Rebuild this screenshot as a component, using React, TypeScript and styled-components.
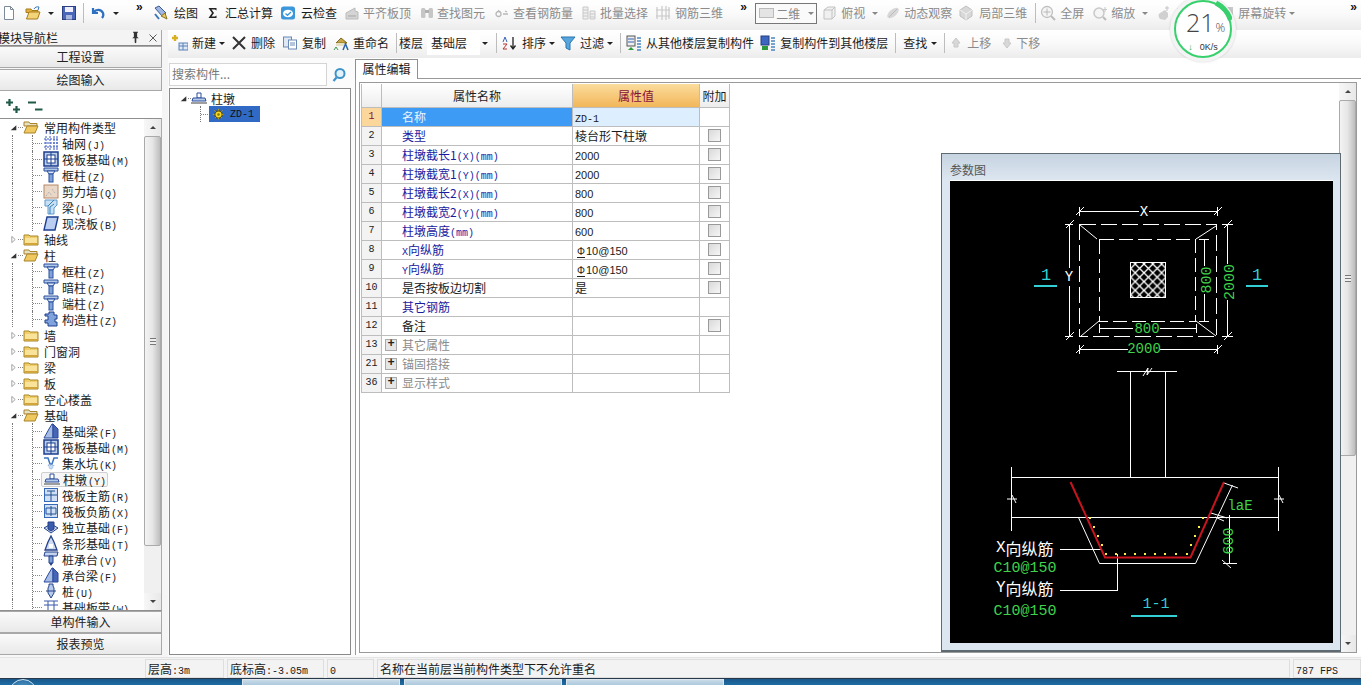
import React from "react";
import styled, { createGlobalStyle } from "styled-components";

const CJK = `"Noto Sans CJK SC", "Liberation Sans", sans-serif`;

const Global = createGlobalStyle`
  html, body { margin: 0; padding: 0; background: #f3f3f3; }
  * { box-sizing: border-box; }
  body { font-family: ${CJK}; font-size: 12px; color: #1a1a1a; overflow: hidden; }
`;

/* ---------- icons ---------- */
const S = styled.svg`flex: none; display: block;`;
const I = ({ children, size = 16 }: { children: React.ReactNode; size?: number }) => (
  <S width={size} height={size} viewBox="0 0 16 16">
    {children}
  </S>
);

const glyphs: Record<string, React.ReactNode> = {
  doc: <path d="M3.5 1.5h6l3 3v10h-9z M9.5 1.5v3h3" fill="#fff" stroke="#7d8a99" />,
  open: <><path d="M1 4h5l1 1.500h6v2H1z" fill="#e0b040" stroke="#a87a18" /><path d="M1.500 14l2.500-7h11l-2.500 7z" fill="#f4d479" stroke="#a87a18" /><path d="M9 4c1-2 3-2.500 5-2l-1 3" fill="none" stroke="#3c78b8" /></>,
  save: <><rect x="1.500" y="1.500" width="13" height="13" fill="#4a66b8" stroke="#2c3f80" /><rect x="4" y="2" width="8" height="5" fill="#eef" /><rect x="5" y="10" width="6" height="4.500" fill="#aab8dd" /></>,
  undo: <path d="M3 3v5h5M3.500 7.500C6 4 11 4 13 8c.7 1.800.2 3.600-1 5" fill="none" stroke="#2d6fc0" strokeWidth="2.200" />,
  draw: <><path d="M2 3l7 8 4-3-7-7z" fill="#9fb7e0" stroke="#3c5a98" /><path d="M8 11l6 3-2-6z" fill="#e8c860" stroke="#8a7420" /><path d="M2 9l4 5" stroke="#3c78b8" strokeWidth="2" /></>,
  sigma: <path d="M3.500 3h8v2.500L10 4.500H6.500L9 8l-2.500 3.500H10l1.500-1V13h-8l3.500-5z" fill="#222" />,
  cloud: <><rect x="1" y="1.500" width="14" height="13" rx="2.500" fill="#3b96da" /><ellipse cx="8" cy="8.500" rx="5" ry="3.800" fill="#fff" /><path d="M5.500 8.500l2 1.800 3.500-3.300" stroke="#3b96da" strokeWidth="1.300" fill="none" /></>,
  level: <><path d="M2 14V8l9-5v3l3 1v7z" fill="#d4d4d4" stroke="#bbb" /><path d="M4 11h8" stroke="#a5a5a5" /></>,
  find: <><rect x="2" y="3" width="4.500" height="10" rx="1.500" fill="#c6c6c6" /><rect x="9.500" y="3" width="4.500" height="10" rx="1.500" fill="#c6c6c6" /><rect x="6" y="5" width="4" height="3" fill="#b0b0b0" /></>,
  eye: <path d="M2 9a2.500 2.500 0 1 0 5 0 2.500 2.500 0 1 0-5 0M9 9h5M5 5l-1 2M11 6l2 1" fill="none" stroke="#b8b8b8" strokeWidth="1.300" />,
  batch: <path d="M2 2h5v12H2zM2 5h5M2 8h5M2 11h5M9 6h5v8H9zM9 9h5M9 12h5" fill="#f0f0f0" stroke="#c8c8c8" />,
  grid3: <path d="M2 2v12M7 1v14M11 1v14M14 2v12M1 5h14M1 11h14" fill="none" stroke="#c8c8c8" strokeWidth="1.200" />,
  view: <><path d="M3 5l4-3h7v9l-3 3H3z" fill="#f0f0f0" stroke="#c2c2c2" /><path d="M3 5h8v9M11 5l3-3" fill="none" stroke="#c2c2c2" /></>,
  orbit: <><ellipse cx="8" cy="8" rx="7" ry="3.500" transform="rotate(-40 8 8)" fill="#d8d8d8" /><path d="M4 12l8-8" stroke="#bbb" /></>,
  local: <><path d="M8 1l6 4v6l-6 4-6-4V5z" fill="#d8d8d8" stroke="#c0c0c0" /><path d="M2 5l6 4 6-4M8 9v6" stroke="#f2f2f2" fill="none" /></>,
  zoomfull: <><circle cx="7" cy="7" r="5.500" fill="#f5f5f5" stroke="#c0c0c0" strokeWidth="1.300" /><path d="M7 3.500v7M3.500 7h7" stroke="#b8b8b8" /><path d="M11 11l4 4" stroke="#bbb" strokeWidth="2" /></>,
  zoom: <><circle cx="7" cy="8" r="5" fill="#f5f5f5" stroke="#c8c8c8" strokeWidth="1.500" /><path d="M11 12l3 3" stroke="#bbb" strokeWidth="2" /><path d="M13 2v5M11 4.500h4" stroke="#c8c8c8" /></>,
  pan: <><path d="M4 14c-2-3-2-5 0-6l5-3 3 3v4l-3 3z" fill="#d0d0d0" /><path d="M11 1v5M9 3h4" stroke="#c4c4c4" /></>,
  rotate: <rect x="2" y="2" width="12" height="12" fill="#c8c8c8" />,
  newitem: <><path d="M3 0v6M0 3h6" stroke="#d8b020" strokeWidth="2.400" /><rect x="7" y="8" width="9" height="7" fill="#dfe8f5" stroke="#5a82b8" /><path d="M7 11h9M11 8v7" stroke="#5a82b8" /></>,
  del: <path d="M2 2l12 12M14 2L2 14" stroke="#333" strokeWidth="2" />,
  copy: <><rect x="1.500" y="2" width="8" height="10" fill="#dfe8f5" stroke="#6a8ab5" /><rect x="6.500" y="5" width="8" height="9" fill="#fff" stroke="#6a8ab5" /><path d="M8 8h5M8 10h5" stroke="#6a8ab5" /></>,
  rename: <><path d="M3 8l5-5 6 5z" fill="#c9a64a" stroke="#7c6a20" /><rect x="3" y="8" width="8" height="3" fill="#e6e0c0" /><path d="M10 15l2.500-6 2.500 6" stroke="#2d63ad" strokeWidth="1.500" fill="none" /><path d="M1 15l2-3 2 3" stroke="#3a9a4a" fill="none" /></>,
  sort: <><path d="M12 2v11M9.500 10.500l2.500 3.500 2.500-3.500" stroke="#222" fill="none" strokeWidth="1.300" /><path d="M2 7l2-5 2 5" stroke="#3362b5" fill="none" /><path d="M2 9h4l-4 5h4" stroke="#b53333" fill="none" /></>,
  filter: <path d="M1 2h14l-5 6v7l-4-2V8z" fill="#57a7de" stroke="#2c75ad" />,
  copyin: <><rect x="1" y="1" width="8" height="10" fill="#eee" stroke="#555" /><path d="M2 4h6M2 7h6" stroke="#3362b5" /><path d="M2 15l3-3 3 3z" fill="#2a9a3a" /><path d="M11 3h4M11 6h4M11 9h4M11 12h4M11 15h4" stroke="#4a86c0" strokeWidth="1.400" /></>,
  copyout: <><rect x="1" y="1" width="8" height="9" fill="#3c66c0" stroke="#223f80" /><rect x="2" y="11" width="6" height="4" fill="#2a9a3a" /><path d="M11 3h4M11 6h4M11 9h4M11 12h4M11 15h4" stroke="#4a86c0" strokeWidth="1.400" /></>,
  up: <path d="M8 3l4 5h-2v4H6V8H4z" fill="#d8d8d8" stroke="#c8c8c8" />,
  down: <path d="M8 13l4-5h-2V4H6v4H4z" fill="#d8d8d8" stroke="#c8c8c8" />,
  search: <><circle cx="9" cy="6.500" r="4.500" fill="#e4f2fb" stroke="#3e93c8" strokeWidth="2" /><path d="M5.500 10.500l-3 3.500" stroke="#3e93c8" strokeWidth="2.200" /></>,
  folder: <><path d="M1 4h5l1 1h8v9H1z" fill="#f1cf68" stroke="#a8842a" /><path d="M2 7h12v6H2z" fill="#f9e29a" /><path d="M2 12h12v1.500H2z" fill="#d2a437" /></>,
  folderOpen: <><path d="M1 3h5l1 1.500h7V7H1z" fill="#e8e0c0" stroke="#a8842a" /><path d="M1 14l3-7h11l-3 7z" fill="#f0c860" stroke="#a8842a" /></>,
  axis: <path d="M1 4h14M1 8h14M1 12h14M3 1v14M7 1v14M11 1v14M14 1v14" stroke="#3a58c0" fill="none" strokeDasharray="2 1" />,
  raft: <><rect x="1" y="1" width="14" height="14" fill="#bcd0ec" stroke="#1b3f8f" strokeWidth="1.500" /><rect x="4" y="4" width="8" height="8" fill="#fff" stroke="#1b3f8f" /><path d="M8 1v14M1 8h14" stroke="#1b3f8f" /></>,
  col: <><path d="M1 1h14v3H1z" fill="#b4c9ea" stroke="#284f9c" /><path d="M4 4h8l-2 3H6z" fill="#dce8f8" stroke="#284f9c" /><rect x="6" y="7" width="4" height="8" fill="#7fa3da" stroke="#284f9c" /></>,
  wall: <><rect x="1" y="2" width="14" height="13" fill="#e9d7c8" stroke="#b88866" /><path d="M3 13l3-4 3 4M9 6l3 4" stroke="#a8a8a8" strokeDasharray="1 1" fill="none" /></>,
  beam: <><path d="M2 1h12v5l-3 3v6H5V7H2z" fill="#c8e0f4" stroke="#5c99cc" /><path d="M5 7l6-6M7 15V8l4-3" stroke="#3d7fb8" fill="none" /></>,
  slab: <path d="M4 2h11l-3 13H1z" fill="#b9cef0" stroke="#1e3f90" strokeWidth="1.400" />,
  stru: <path d="M6 1h5v3h3v4h-2v3h2v4H5v-3H2V9h3V5H2V3h4z" fill="#7fa3da" stroke="#1e3f90" />,
  fbeam: <><path d="M1 15l5-9 3-5h1v14z" fill="#a7bde4" stroke="#28499c" /><path d="M10 1l5 5v9h-5z" fill="#4766b5" stroke="#28499c" /></>,
  pit: <><path d="M1 3h4l2 6h2l2-6h4" fill="none" stroke="#3d74c0" strokeWidth="1.500" /><path d="M5 10h6l-2 4H7z" fill="#c7dcf5" stroke="#8caad6" strokeDasharray="1 1" /></>,
  pier: <><path d="M6 3h4v5H6z" fill="#fff" stroke="#2c4f9c" /><path d="M2 8h12l1 3H1z" fill="#b6caea" stroke="#2c4f9c" /><path d="M0 13h16" stroke="#888" strokeWidth="1.600" /></>,
  main: <><rect x="1.500" y="1.500" width="13" height="13" fill="#cfe0f6" stroke="#3668b8" /><path d="M2 8h12M8 4v10M4 4h8" stroke="#22518f" fill="none" /></>,
  neg: <><rect x="1.500" y="1.500" width="13" height="13" fill="#cfe0f6" stroke="#3668b8" /><path d="M3 5h10v6H3zM8 3v10" stroke="#22518f" fill="none" /></>,
  iso: <><path d="M1 9l7-4 7 4-7 5z" fill="#cbdaf0" stroke="#24418a" /><path d="M5 3h6v7l-3 2-3-2z" fill="#3a5caa" stroke="#24418a" /></>,
  strip: <><path d="M8 1l3 6 3 8H2l3-8z" fill="#cedcf2" stroke="#24418a" strokeWidth="1.300" /><path d="M6 9h4v4H6z" fill="#fff" /></>,
  cap: <><path d="M2 1h13l-1 4H1z" fill="#c3d5ee" stroke="#24418a" /><path d="M6 5h4v7H6z" fill="#7aa0d8" stroke="#24418a" /><path d="M6 12h4l-2 3z" fill="#24418a" /></>,
  pile: <><path d="M6 1h4v2l1 2v5l-3 5-3-5V5l1-2z" fill="#b6caea" stroke="#24418a" /><path d="M3 8h10" stroke="#24418a" /></>,
  strap: <path d="M1 2h14M1 6h14M5 2v13M11 2v13" fill="none" stroke="#3a58a8" />,
  gear: <><circle cx="8" cy="8" r="4.500" fill="#f4d82c" stroke="#5c4a00" strokeWidth="1.500" /><circle cx="8" cy="8" r="1.600" fill="#8d7400" /><path d="M8 1v14M1 8h14M3 3l10 10M13 3L3 13" stroke="#c8a800" strokeWidth="1" strokeDasharray="2 9" /></>,
  pin: <path d="M5 1h6v1h-1v5l2 2H9v5l-1 1-1-1V9H4l2-2V2H5z" fill="#333" />,
  close: <path d="M4 4l8 8M12 4l-8 8" stroke="#444" />,
  expandAll: <path d="M4.500 1v7M1 4.500h7M11.500 8v7M8 11.500h7" stroke="#1f5a48" strokeWidth="2.200" />,
  collapseAll: <path d="M1 4.500h8M8 11.500h7.500" stroke="#1f5a48" strokeWidth="2.200" />,
  triClosed: <path d="M5 2.500l6 5.500-6 5.500z" fill="#fff" stroke="#8a8a8a" strokeWidth="1.400" />,
  triOpen: <path d="M13 4v9H3z" fill="#333" />,
};

/* ---------- page frame ---------- */
const Page = styled.div`
  width: 1361px; height: 685px; position: relative; overflow: hidden;
  display: flex; flex-direction: column; background: #f5f5f5;
`;
const Bar = styled.div<{ $h: number; $pl?: number; $pb?: number }>`
  height: ${(p) => p.$h}px; flex: none; display: flex; align-items: center;
  padding-left: ${(p) => p.$pl ?? 0}px; padding-bottom: ${(p) => p.$pb ?? 0}px; white-space: nowrap;
  background: linear-gradient(#ffffff, #fafafa 45%, #ececec);
`;
const Tool = styled.div<{ $ml?: number; $gap?: number; $muted?: boolean }>`
  display: flex; align-items: center; flex: none; height: 100%;
  margin-left: ${(p) => p.$ml ?? 0}px; gap: ${(p) => p.$gap ?? 4}px;
  color: ${(p) => (p.$muted ? "#8b8b8b" : "#1c1c1c")}; font-size: 12px; line-height: 16px;
`;
const Caret = styled.span<{ $ml?: number; $muted?: boolean }>`
  flex: none; width: 0; height: 0; margin-left: ${(p) => p.$ml ?? 0}px;
  border-left: 3px solid transparent; border-right: 3px solid transparent;
  border-top: 3px solid ${(p) => (p.$muted ? "#888" : "#222")};
`;
const Sep = styled.span<{ $ml: number }>`
  flex: none; width: 1px; height: 20px; margin-left: ${(p) => p.$ml}px; background: #bdbdbd;
`;
const More = styled.span<{ $ml: number }>`
  flex: none; width: 10px; margin-left: ${(p) => p.$ml}px; margin-top: -12px;
  font: bold 12px/10px "Liberation Sans", sans-serif; color: #111;
`;
const Combo = styled.div`
  flex: none; width: 62px; height: 21px; margin-left: 5px; border: 1px solid #777;
  display: flex; align-items: center; padding-left: 3px; gap: 2px; color: #888; background: #fafafa;
`;
const ComboBox = styled.span`width: 15px; height: 10px; background: #e4e4e4; border: 1px solid #bbb;`;
const FloorValue = styled.span`
  flex: none; width: 53px; margin-left: 4px; padding-left: 4px; height: 24px; line-height: 24px; background: #fff;
`;

const Body = styled.div`flex: 1; display: flex; min-height: 0;`;

/* ---------- left navigator ---------- */
const Left = styled.div`
  width: 162px; flex: none; display: flex; flex-direction: column; margin-right: 6px;
  background: #f7f7f7; padding-bottom: 2px;
`;
const NavHead = styled.div`
  height: 16px; flex: none; display: flex; align-items: center; margin-left: -2px; padding-right: 1px;
  font-size: 12px; border-bottom: 1px solid #888; background: #f4f4f4; border-right: 1px solid #aaa;
`;
const NavTitle = styled.span`flex: 1;`;
const NavGap = styled.span`flex: none; width: 4px;`;
const NavBtn = styled.div<{ $mt?: number }>`
  height: 22px; flex: none; text-align: center; line-height: 20px; font-size: 12px; margin-top: ${(p) => p.$mt ?? 0}px;
  background: linear-gradient(#fafafa, #e9e9e9); border: 1px solid #a8a8a8; border-left: 0; color: #222;
`;
const Tools = styled.div`
  height: 27px; flex: none; display: flex; align-items: flex-start; padding: 7px 0 0 5px; gap: 6px; background: #fff;
`;
const TreeWrap = styled.div`
  flex: 1; min-height: 0; display: flex; background: #fff; border: 1px solid #8f8f8f; border-left: 0; border-right-color: #aaa;
`;
const Tree = styled.div`flex: 1; overflow: hidden; min-width: 0;`;
const Row = styled.div`display: flex; align-items: center; height: 16px; position: relative;`;
const Expander = styled.span`flex: none; margin-left: 9px; width: 9px; display: block;`;
const HDots = styled.span<{ $w: number }>`
  flex: none; width: ${(p) => p.$w}px; height: 1px;
  background: repeating-linear-gradient(90deg, #888 0 1px, transparent 1px 2px);
`;
const Rail = styled.span<{ $ml?: number; $w: number }>`
  flex: none; align-self: stretch; margin-left: ${(p) => p.$ml ?? 0}px; width: ${(p) => p.$w}px;
  border-left: 1px dotted #777;
`;
const Branch = styled.span<{ $w?: number }>`
  flex: none; align-self: stretch; width: ${(p) => p.$w ?? 11}px; border-left: 1px dotted #777; display: flex; align-items: center;
`;
const Label = styled.span<{ $ml: number }>`margin-left: ${(p) => p.$ml}px; font-size: 12px; white-space: nowrap; color: #1c1c1c;`;
const Code = styled.span`font: 10px "Liberation Mono", monospace; margin-left: 1px;`;
const Hover = styled.div`
  display: flex; align-items: center; flex: none; height: 15px; width: 67px; margin-left: -2px; padding-left: 2px;
  border: 1px solid #cfcfcf; border-radius: 2px; background: #f6f6f6;
`;

const Scroll = styled.div<{ $w: number }>`
  width: ${(p) => p.$w}px; flex: none; display: flex; flex-direction: column; align-items: center; background: #f0f0f0;
`;
const ScrollBtn = styled.div`
  height: 17px; flex: none; width: 100%; display: flex; align-items: center; justify-content: center;
  background: linear-gradient(90deg, #f7f7f7, #e8e8e8);
`;
const ArrowUp = styled.span`width: 0; height: 0; border-left: 3px solid transparent; border-right: 3px solid transparent; border-bottom: 3px solid #444;`;
const ArrowDown = styled(ArrowUp)`border-bottom: 0; border-top: 3px solid #444;`;
const Thumb = styled.div<{ $h: number }>`
  height: ${(p) => p.$h}px; width: 100%; flex: none; border: 1px solid #aaa; border-radius: 2px;
  background: linear-gradient(90deg, #f3f3f3, #e6e6e6 50%, #bdbdbd);
  display: flex; align-items: center; justify-content: center;
`;
const Grip = styled.span`width: 6px; height: 7px; background: repeating-linear-gradient(#777 0 1px, #eee 1px 3px);`;
const Spacer = styled.div`flex: 1;`;

/* ---------- centre ---------- */
const Main = styled.div`flex: 1; min-width: 0; display: flex; flex-direction: column;`;
const Work = styled.div`flex: 1; min-height: 0; display: flex; background: #fbfbfb; padding-bottom: 2px;`;
const Mid = styled.div`
  width: 183px; flex: none; margin-right: 4px; padding-top: 5px; display: flex; flex-direction: column; gap: 2px;
`;
const SearchRow = styled.div`height: 23px; flex: none; display: flex; align-items: center; gap: 4px;`;
const SearchInput = styled.div`
  width: 158px; height: 23px; border: 1px solid #d5d5d5; background: #fff; color: #777; padding-left: 2px; line-height: 20px; margin-left: 1px;
`;
const MidTree = styled.div`
  flex: 1; background: #fff; border: 1px solid #8a8a8a; margin-left: 1px; padding-top: 1px;
`;
const MidRow = styled.div<{ $pl: number }>`
  display: flex; align-items: center; height: 16px; padding-left: ${(p) => p.$pl}px;
`;
const Selected = styled.span`
  display: flex; align-items: center; gap: 5px; width: 51px; height: 16px; padding-left: 3px; margin-left: 1px; background: #316ac5;
  font: 10px "Liberation Mono", monospace; color: #111;
`;

/* ---------- right ---------- */
const Right = styled.div`flex: 1; min-width: 0; display: flex; flex-direction: column;`;
const TabStrip = styled.div`height: 20px; flex: none; display: flex; align-items: flex-end; background: #fff;`;
const Tab = styled.div`
  width: 63px; height: 20px; border: 1px solid #909090; border-bottom: 0; background: #fff; text-align: center; line-height: 17px; margin-bottom: -1px; z-index: 1;
`;
const Panel = styled.div`
  flex: 1; min-height: 0; position: relative; background: #fff; border: 1px solid #999; border-width: 1px 0 0 1px; padding: 3px 4px 2px 3px; display: flex;
`;
const Inner = styled.div`
  flex: 1; display: flex; border: 1px solid #9a9a9a; min-width: 0; background: #fff; position: relative;
`;
const GridArea = styled.div`flex: 1; padding: 1px 0 0 1px; min-width: 0;`;
const Table = styled.table`
  border-collapse: collapse; table-layout: fixed; width: 368px; font-size: 12px;
  td, th { border: 1px solid #bdbdbd; padding: 0; height: 19px; font-weight: normal; overflow: hidden; white-space: nowrap; }
  th { height: 23px; border-top: 0; }
`;
const Th = styled.th<{ $hot?: boolean }>`
  background: ${(p) => (p.$hot ? "linear-gradient(#fbdc9c, #f2b65a)" : "linear-gradient(#ffffff, #ededed)")};
  color: ${(p) => (p.$hot ? "#86103c" : "#1c1c1c")};
`;
const Num = styled.td<{ $on?: boolean }>`
  text-align: center; font: 10px "Liberation Mono", monospace;
  background: ${(p) => (p.$on ? "#fcd79c" : "#f3f3f3")}; color: ${(p) => (p.$on ? "#8a0f2c" : "#222")};
`;
const Name = styled.td<{ $tone: string }>`
  padding-left: 20px !important;
  color: ${(p) => ({ blue: "#1b1ba0", black: "#1a1a1a", gray: "#8b8b8b", sel: "#eaf4ff" } as Record<string, string>)[p.$tone]};
  background: ${(p) => (p.$tone === "sel" ? "#3d9bf5" : "#fff")};
`;
const GroupName = styled.div`display: flex; align-items: center; gap: 5px; margin-left: -17px; color: #8b8b8b;`;
const Plus = styled.span`
  width: 12px; height: 12px; border: 1px solid #aaa; background: #e6e6e6; flex: none;
  font: bold 12px/9px "Liberation Mono", monospace; text-align: center; color: #222;
`;
const Val = styled.td<{ $sel?: boolean }>`
  padding-left: 2px !important; background: ${(p) => (p.$sel ? "#ddeeff" : "#fff")};
`;
const Latin = styled.span`font: 11px "Liberation Sans", sans-serif;`;
const Rebar = styled.span`
  display: inline-block; font: 10px/10px "Liberation Sans", sans-serif; border-bottom: 1px solid #222; margin: 0 1px 0 2px;
`;
const Mono = styled.span`font: 10px "Liberation Mono", monospace;`;
const Extra = styled.td`text-align: center;`;
const Check = styled.span`
  display: block; width: 13px; height: 13px; margin: 0 auto; border: 1px solid #9a9a9a;
  background: linear-gradient(135deg, #d9d9d9, #f6f6f6);
`;
const ParamWin = styled.div`
  position: absolute; left: 581px; top: 70px; width: 400px; height: 499px; border: 1px solid #5e6a72; border-bottom: 2px solid #5e6a72;
  background: linear-gradient(#c6d3e0, #dce6f1 26px); padding: 0 7px 7px 8px; display: flex; flex-direction: column;
`;
const ParamTitle = styled.div`height: 26px; flex: none; line-height: 31px; color: #555; font-size: 12px;`;
const Black = styled.div`flex: 1; background: #000; min-height: 0; border-top: 1px solid #fff;`;

/* ---------- status ---------- */
const Status = styled.div`
  height: 21px; flex: none; display: flex; padding-left: 145px; gap: 3px; background: #f3f3f3; border-top: 1px solid #e4e4e4; padding-top: 1px;
`;
const Cell = styled.div<{ $w?: number }>`
  ${(p) => (p.$w ? `width: ${p.$w}px; flex: none;` : "flex: 1;")}
  border: 1px solid #dedede; padding-left: 2px; line-height: 17px; font-size: 12px; white-space: nowrap;
`;
const Task = styled.div`
  height: 7px; flex: none; display: flex; align-items: flex-start; padding-left: 242px; gap: 4px; position: relative;
  background: linear-gradient(#1a5788, #1d6ca4); border-top: 1px solid #26384a;
`;
const Orb = styled.span`
  position: absolute; left: 9px; top: 0; width: 28px; height: 28px; border-radius: 50%; border: 1px solid #cfe3f2;
  background: radial-gradient(#5aa5d8, #1e5f90);
`;
const TaskBtn = styled.span<{ $w: number }>`
  width: ${(p) => p.$w}px; height: 7px; flex: none; border: 1px solid #dbe6ef; border-bottom: 0; background: linear-gradient(#c8dbe9, #a6c5da);
`;

/* ---------- speed ball ---------- */
const Ball = styled.div`
  position: absolute; left: 1170px; top: -4px; width: 66px; height: 66px; border-radius: 50%; background: #f4f4f4;
  box-shadow: 0 0 2px rgba(0,0,0,.18); display: flex; align-items: center; justify-content: center;
`;
const BallFace = styled.div`
  width: 58px; height: 58px; border-radius: 50%; background: #fff; border: 2px solid #38d06c; position: relative;
  display: flex; flex-direction: column; align-items: center; font-family: "Open Sans", "Liberation Sans", sans-serif; color: #444;
`;
const Pct = styled.div`margin-top: 8px; margin-left: 5px; font-size: 25px; font-weight: 300; line-height: 25px;`;
const PctSign = styled.span`font-size: 12px; margin-left: 1px;`;
const Speed = styled.div`font: 9px/10px "Liberation Sans", sans-serif; display: flex; gap: 7px; margin-top: 2px; color: #333;`;
const SpeedArrow = styled.span`color: #1aa64a; font-weight: bold;`;
const BallArc = styled.svg`position: absolute; left: -2px; top: -2px; pointer-events: none;`;

/* ---------- data ---------- */
type Item = { i: string; t: string; ml: number; gap: number; muted?: boolean; caret?: number };
const Tb1: React.FC = () => {
  const row: Item[] = [
    { i: "draw", t: "绘图", ml: 7, gap: 5 },
    { i: "sigma", t: "汇总计算", ml: 7, gap: 4 },
    { i: "cloud", t: "云检查", ml: 7, gap: 5 },
    { i: "level", t: "平齐板顶", ml: 7, gap: 3, muted: true },
    { i: "find", t: "查找图元", ml: 8, gap: 2, muted: true },
    { i: "eye", t: "查看钢筋量", ml: 9, gap: 3, muted: true },
    { i: "batch", t: "批量选择", ml: 8, gap: 3, muted: true },
    { i: "grid3", t: "钢筋三维", ml: 7, gap: 4, muted: true },
  ];
  const row2: Item[] = [
    { i: "view", t: "俯视", ml: 4, gap: 4, muted: true, caret: 7 },
    { i: "orbit", t: "动态观察", ml: 7, gap: 3, muted: true },
    { i: "local", t: "局部三维", ml: 6, gap: 5, muted: true },
  ];
  const row3: Item[] = [
    { i: "zoomfull", t: "全屏", ml: 4, gap: 4, muted: true },
    { i: "zoom", t: "缩放", ml: 8, gap: 3, muted: true, caret: 7 },
    { i: "pan", t: "平移", ml: 8, gap: 4, muted: true },
    { i: "rotate", t: "屏幕旋转", ml: 19, gap: 3, muted: true, caret: 3 },
  ];
  const render = (r: Item[]) =>
    r.map((x) => (
      <React.Fragment key={x.t}>
        <Tool $ml={x.ml} $gap={x.gap} $muted={x.muted}>
          <I>{glyphs[x.i]}</I>
          {x.t}
        </Tool>
        {x.caret !== undefined && <Caret $ml={x.caret} $muted={x.muted} />}
      </React.Fragment>
    ));
  return (
    <Bar $h={30} $pl={1} $pb={4}>
      <Tool><I>{glyphs.doc}</I></Tool>
      <Tool $ml={8}><I>{glyphs.open}</I></Tool>
      <Caret $ml={7} />
      <Tool $ml={7}><I>{glyphs.save}</I></Tool>
      <Sep $ml={6} />
      <Tool $ml={6}><I>{glyphs.undo}</I></Tool>
      <Caret $ml={7} />
      <More $ml={17}>»</More>
      {render(row)}
      <More $ml={17}>»</More>
      <Combo><ComboBox />二维<Caret $ml={6} $muted /></Combo>
      {render(row2)}
      <Sep $ml={8} />
      {render(row3)}
      <More $ml={55}>»</More>
    </Bar>
  );
};

const Tb2: React.FC = () => (
  <Bar $h={28} $pl={4} $pb={2}>
    <Tool $gap={4}><I>{glyphs.newitem}</I>新建</Tool><Caret $ml={3} />
    <Tool $ml={6} $gap={4}><I>{glyphs.del}</I>删除</Tool>
    <Tool $ml={7} $gap={4}><I>{glyphs.copy}</I>复制</Tool>
    <Tool $ml={7} $gap={4}><I>{glyphs.rename}</I>重命名</Tool>
    <Sep $ml={7} />
    <Tool $ml={2}>楼层</Tool>
    <FloorValue>基础层</FloorValue>
    <Caret $ml={2} />
    <Sep $ml={8} />
    <Tool $ml={4} $gap={5}><I>{glyphs.sort}</I>排序</Tool><Caret $ml={3} />
    <Tool $ml={5} $gap={4}><I>{glyphs.filter}</I>过滤</Tool><Caret $ml={3} />
    <Sep $ml={7} />
    <Tool $ml={5} $gap={4}><I>{glyphs.copyin}</I>从其他楼层复制构件</Tool>
    <Tool $ml={6} $gap={4}><I>{glyphs.copyout}</I>复制构件到其他楼层</Tool>
    <Sep $ml={7} />
    <Tool $ml={7}>查找</Tool><Caret $ml={4} />
    <Sep $ml={7} />
    <Tool $ml={3} $gap={3} $muted><I>{glyphs.up}</I>上移</Tool>
    <Tool $ml={8} $gap={1} $muted><I>{glyphs.down}</I>下移</Tool>
  </Bar>
);

const treeRows: { k: 0 | 1; t: string; c?: string; i?: string; open?: boolean; hover?: boolean }[] = [
  { k: 0, t: "常用构件类型", open: true },
  { k: 1, t: "轴网", c: "(J)", i: "axis" },
  { k: 1, t: "筏板基础", c: "(M)", i: "raft" },
  { k: 1, t: "框柱", c: "(Z)", i: "col" },
  { k: 1, t: "剪力墙", c: "(Q)", i: "wall" },
  { k: 1, t: "梁", c: "(L)", i: "beam" },
  { k: 1, t: "现浇板", c: "(B)", i: "slab" },
  { k: 0, t: "轴线" },
  { k: 0, t: "柱", open: true },
  { k: 1, t: "框柱", c: "(Z)", i: "col" },
  { k: 1, t: "暗柱", c: "(Z)", i: "col" },
  { k: 1, t: "端柱", c: "(Z)", i: "col" },
  { k: 1, t: "构造柱", c: "(Z)", i: "stru" },
  { k: 0, t: "墙" },
  { k: 0, t: "门窗洞" },
  { k: 0, t: "梁" },
  { k: 0, t: "板" },
  { k: 0, t: "空心楼盖" },
  { k: 0, t: "基础", open: true },
  { k: 1, t: "基础梁", c: "(F)", i: "fbeam" },
  { k: 1, t: "筏板基础", c: "(M)", i: "raft" },
  { k: 1, t: "集水坑", c: "(K)", i: "pit" },
  { k: 1, t: "柱墩", c: "(Y)", i: "pier", hover: true },
  { k: 1, t: "筏板主筋", c: "(R)", i: "main" },
  { k: 1, t: "筏板负筋", c: "(X)", i: "neg" },
  { k: 1, t: "独立基础", c: "(F)", i: "iso" },
  { k: 1, t: "条形基础", c: "(T)", i: "strip" },
  { k: 1, t: "桩承台", c: "(V)", i: "cap" },
  { k: 1, t: "承台梁", c: "(F)", i: "fbeam" },
  { k: 1, t: "桩", c: "(U)", i: "pile" },
  { k: 1, t: "基础板带", c: "(W)", i: "strap" },
];

const TreeItem: React.FC<{ r: (typeof treeRows)[number] }> = ({ r }) => {
  if (r.k === 0)
    return (
      <Row>
        <Expander><I size={9}>{r.open ? glyphs.triOpen : glyphs.triClosed}</I></Expander>
        <HDots $w={5} />
        <I>{r.open ? glyphs.folderOpen : glyphs.folder}</I>
        <Label $ml={5}>{r.t}</Label>
      </Row>
    );
  const body = (
    <>
      <I>{glyphs[r.i as string]}</I>
      <Label $ml={3}>{r.t}<Code>{r.c}</Code></Label>
    </>
  );
  return (
    <Row>
      <Rail $ml={12} $w={20} />
      <Branch><HDots $w={10} /></Branch>
      {r.hover ? <Hover>{body}</Hover> : body}
    </Row>
  );
};

const rows: { n: number; name: React.ReactNode; tone: string; val?: React.ReactNode; check?: boolean; group?: boolean }[] = [
  { n: 1, name: "名称", tone: "sel", val: <Mono>ZD-1</Mono> },
  { n: 2, name: "类型", tone: "blue", val: "棱台形下柱墩", check: true },
  { n: 3, name: <>柱墩截长1<Mono>(X)(mm)</Mono></>, tone: "blue", val: <Latin>2000</Latin>, check: true },
  { n: 4, name: <>柱墩截宽1<Mono>(Y)(mm)</Mono></>, tone: "blue", val: <Latin>2000</Latin>, check: true },
  { n: 5, name: <>柱墩截长2<Mono>(X)(mm)</Mono></>, tone: "blue", val: <Latin>800</Latin>, check: true },
  { n: 6, name: <>柱墩截宽2<Mono>(Y)(mm)</Mono></>, tone: "blue", val: <Latin>800</Latin>, check: true },
  { n: 7, name: <>柱墩高度<Mono>(mm)</Mono></>, tone: "blue", val: <Latin>600</Latin>, check: true },
  { n: 8, name: <><Mono>X</Mono>向纵筋</>, tone: "blue", val: <Latin><Rebar>Φ</Rebar>10@150</Latin>, check: true },
  { n: 9, name: <><Mono>Y</Mono>向纵筋</>, tone: "blue", val: <Latin><Rebar>Φ</Rebar>10@150</Latin>, check: true },
  { n: 10, name: "是否按板边切割", tone: "black", val: "是", check: true },
  { n: 11, name: "其它钢筋", tone: "blue" },
  { n: 12, name: "备注", tone: "black", check: true },
  { n: 13, name: "其它属性", tone: "gray", group: true },
  { n: 21, name: "锚固搭接", tone: "gray", group: true },
  { n: 36, name: "显示样式", tone: "gray", group: true },
];

/* ---------- CAD drawing ---------- */
const W = "#ffffff";
const G = "#3fd24a";
const C = "#33cfd6";
const cadMono = `"Liberation Mono", monospace`;
const Tk: React.FC<{ x: number; y: number }> = ({ x, y }) => (
  <path d={`M${x - 4} ${y + 4}L${x + 4} ${y - 4}`} stroke={W} fill="none" />
);
const Txt: React.FC<{ x: number; y: number; c?: string; s?: number; r?: number; children: React.ReactNode }> = ({ x, y, c = G, s = 13, r, children }) => (
  <text x={x} y={y} fill={c} fontSize={s} fontFamily={cadMono} textAnchor="middle" dominantBaseline="central" transform={r ? `rotate(${r} ${x} ${y})` : undefined}>
    {children}
  </text>
);
const Drawing: React.FC = () => {
  const dots = [[451,205],[463,232],[475,259],[487,286],[499,313],[529,313],[556,313],[586,313],[616,313],[646,313],[676,313],[709,313],[742,313],[754,286],[766,259],[778,232],[790,205]];
  return (
    <svg width="382" height="462" viewBox="950 181 382 462" style={{ display: "block" }} shapeRendering="crispEdges">
      <defs>
        <pattern id="hatch" width="8.800" height="8.800" patternUnits="userSpaceOnUse">
          <path d="M0 0L8.800 8.800M8.800 0L0 8.800" stroke="#fff" strokeWidth="1.300" shapeRendering="auto" />
        </pattern>
      </defs>
      <g fill="none" stroke={W} strokeWidth="1">
        <rect x="1079.500" y="224.500" width="137" height="112" strokeDasharray="16 5" />
        <rect x="1099.500" y="239.500" width="96" height="82" strokeDasharray="14 5" />
        <rect x="1130.500" y="262.500" width="35" height="35" fill="url(#hatch)" />
        <path shapeRendering="auto" d="M1080 225L1097 239M1216 226L1196 239M1099 321L1081 336M1196 321L1216 336" />
        <path d="M1079.500 211.500H1139M1149 211.500H1217.500M1079.500 207V216M1217.500 207V216" />
        <path d="M1065 224.500H1073M1069.500 224.500V268M1069.500 286V336.500M1065 336.500H1073" />
        <path d="M1222 224.500H1233M1227.500 224.500V264M1227.500 300V336.500M1222 336.500H1233" />
        <path d="M1199 239.500H1209M1204.500 239.500V266M1204.500 294V321.500M1199 321.500H1209" />
        <path d="M1099.500 328.500H1133M1160 328.500H1196M1099.500 324V333M1196 324V333" />
        <path d="M1079.500 349.500H1128M1160 349.500H1217.500M1079.500 345V354M1217.500 345V354" />
      </g>
      <Tk x={1079.500} y={211.500} /><Tk x={1217.500} y={211.500} /><Tk x={1069.500} y={224.500} /><Tk x={1069.500} y={336.500} />
      <Tk x={1227.500} y={224.500} /><Tk x={1227.500} y={336.500} /><Tk x={1079.500} y={349.500} /><Tk x={1217.500} y={349.500} />
      <Txt x={1144} y={212} c={W} s={14}>X</Txt>
      <Txt x={1069} y={277} c={W} s={14}>Y</Txt>
      <Txt x={1230} y={282} r={-90} s={15}>2000</Txt>
      <Txt x={1207} y={280} r={-90} s={15}>800</Txt>
      <Txt x={1147} y={329} s={14}>800</Txt>
      <Txt x={1144} y={349} s={14}>2000</Txt>
      <Txt x={1046} y={275} c={C} s={17}>1</Txt>
      <Txt x={1257} y={275} c={C} s={17}>1</Txt>
      <path d="M1034 286H1057M1246 286H1268M1131 615.500H1177" stroke={C} strokeWidth="2" fill="none" />

      <g fill="none" stroke={W} strokeWidth="1">
        <path d="M1117 371.500H1177M1130.500 371.500V477.500M1165.500 371.500V477.500" />
        <path shapeRendering="auto" d="M1143 376L1148 368L1147 375L1152 368" />
        <path d="M1012 477.500H1278.500M1012 517.500H1278.500M1011.500 467V531M1278.500 467V531" />
        <path shapeRendering="auto" d="M1007 499H1017M1012 495L1016 503M1274 499H1284M1279 495L1283 503" />
        <path shapeRendering="auto" d="M1078.500 517.500L1099.500 563.500H1195.500L1232.500 485" />
        <path d="M1060 549.500H1102M1060 590.500H1117.500V554" />
        <path d="M1229.500 515V563M1223 563.500H1237" />
        <path shapeRendering="auto" d="M1211 513L1227 518M1224 483L1238 488M1222 560L1231 568M1215 517L1224 521" />
      </g>
      <path shapeRendering="auto" d="M1070.500 482L1105 557.500H1190.500L1224 482" fill="none" stroke="#c8141e" strokeWidth="2" />
      {dots.map(([x, y]) => (
        <rect key={x + "-" + y} x={940 + x / 3 - 1} y={450 + y / 3 - 1} width="2" height="2" fill="#ffef4a" />
      ))}
      <Txt x={1229} y={541} r={-90} s={15}>600</Txt>
      <Txt x={1240} y={506} s={14}>laE</Txt>
      <Txt x={1025} y={568.500} s={15}>C10@150</Txt>
      <Txt x={1025} y={611.500} s={15}>C10@150</Txt>
      <text x="996" y="548" fill={W} fontSize="16" dominantBaseline="central" fontFamily={CJK}><tspan fontFamily={cadMono}>X</tspan>向纵筋</text>
      <text x="996" y="588" fill={W} fontSize="16" dominantBaseline="central" fontFamily={CJK}><tspan fontFamily={cadMono}>Y</tspan>向纵筋</text>
      <Txt x={1156} y={604} c={C} s={15}>1-1</Txt>
    </svg>
  );
};

export default function App() {
  return (
    <Page>
      <Global />
      <Tb1 />
      <Body>
        <Left>
          <NavHead>
            <NavTitle>模块导航栏</NavTitle>
            <I size={13}>{glyphs.pin}</I>
            <NavGap />
            <I size={14}>{glyphs.close}</I>
          </NavHead>
          <NavBtn>工程设置</NavBtn>
          <NavBtn $mt={1}>绘图输入</NavBtn>
          <Tools>
            <I>{glyphs.expandAll}</I>
            <I>{glyphs.collapseAll}</I>
          </Tools>
          <TreeWrap>
            <Tree>
              {treeRows.map((r, i) => (
                <TreeItem key={i} r={r} />
              ))}
            </Tree>
            <Scroll $w={17}>
              <ScrollBtn><ArrowUp /></ScrollBtn>
              <Thumb $h={410}><Grip /></Thumb>
              <Spacer />
              <ScrollBtn><ArrowDown /></ScrollBtn>
            </Scroll>
          </TreeWrap>
          <NavBtn>单构件输入</NavBtn>
          <NavBtn>报表预览</NavBtn>
        </Left>
        <Main>
          <Tb2 />
          <Work>
            <Mid>
              <SearchRow>
                <SearchInput>搜索构件...</SearchInput>
                <I size={16}>{glyphs.search}</I>
              </SearchRow>
              <MidTree>
                <MidRow $pl={0}>
                  <Expander><I size={9}>{glyphs.triOpen}</I></Expander>
                  <HDots $w={3} />
                  <I>{glyphs.pier}</I>
                  <Label $ml={4}>柱墩</Label>
                </MidRow>
                <MidRow $pl={30}>
                  <Branch $w={8}><HDots $w={7} /></Branch>
                  <Selected><I size={13}>{glyphs.gear}</I>ZD-1</Selected>
                </MidRow>
              </MidTree>
            </Mid>
            <Right>
              <TabStrip><Tab>属性编辑</Tab></TabStrip>
              <Panel>
                <Inner>
                  <GridArea>
                    <Table>
                      <colgroup>
                        <col width="20" />
                        <col width="191" />
                        <col width="127" />
                        <col width="30" />
                      </colgroup>
                      <thead>
                        <tr>
                          <Th />
                          <Th>属性名称</Th>
                          <Th $hot>属性值</Th>
                          <Th>附加</Th>
                        </tr>
                      </thead>
                      <tbody>
                        {rows.map((r) => (
                          <tr key={r.n}>
                            <Num $on={r.n === 1}>{r.n}</Num>
                            <Name $tone={r.tone}>
                              {r.group ? <GroupName><Plus>+</Plus>{r.name}</GroupName> : r.name}
                            </Name>
                            <Val $sel={r.n === 1}>{r.val}</Val>
                            <Extra>{r.check && <Check />}</Extra>
                          </tr>
                        ))}
                      </tbody>
                    </Table>
                  </GridArea>
                  <Scroll $w={17}>
                    <ScrollBtn><ArrowUp /></ScrollBtn>
                    <Thumb $h={356}><Grip /></Thumb>
                    <Spacer />
                    <ScrollBtn><ArrowDown /></ScrollBtn>
                  </Scroll>
                  <ParamWin>
                    <ParamTitle>参数图</ParamTitle>
                    <Black><Drawing /></Black>
                  </ParamWin>
                </Inner>
              </Panel>
            </Right>
          </Work>
        </Main>
      </Body>
      <Status>
        <Cell $w={79}>层高<Mono>:3m</Mono></Cell>
        <Cell $w={97}>底标高<Mono>:-3.05m</Mono></Cell>
        <Cell $w={47}><Mono>0</Mono></Cell>
        <Cell>名称在当前层当前构件类型下不允许重名</Cell>
        <Cell $w={68}><Mono>787 FPS</Mono></Cell>
      </Status>
      <Task>
        <Orb />
        <TaskBtn $w={158} />
        <TaskBtn $w={158} />
        <TaskBtn $w={158} />
      </Task>
      <Ball>
        <BallFace>
          <Pct>21<PctSign>%</PctSign></Pct>
          <Speed><SpeedArrow>↓</SpeedArrow>0K/s</Speed>
          <BallArc width="58" height="58" viewBox="0 0 58 58">
            <path d="M42 3A29 29 0 0 1 56.500 20" fill="none" stroke="#38d06c" strokeWidth="5" />
          </BallArc>
        </BallFace>
      </Ball>
    </Page>
  );
}
